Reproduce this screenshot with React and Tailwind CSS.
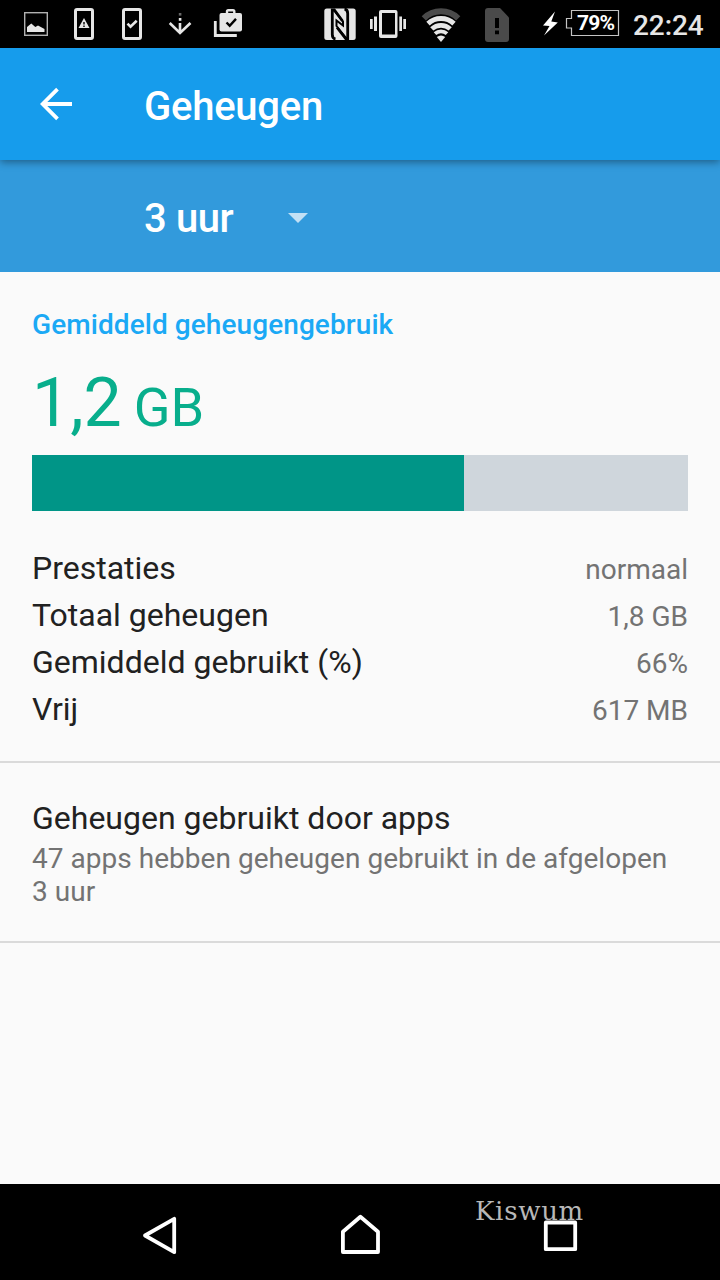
import React from 'react';

const stats = [
    { label: 'Prestaties', value: 'normaal' },
    { label: 'Totaal geheugen', value: '1,8 GB' },
    { label: 'Gemiddeld gebruikt (%)', value: '66%' },
    { label: 'Vrij', value: '617 MB' },
];

function NotificationIcons() {
    return (
        <div className="flex pl-3 text-[#e6e6e6]">
            {/* screenshot */}
            <svg className="size-12" viewBox="0 0 48 48" fill="currentColor">
                <rect x="12.700" y="12.700" width="22.600" height="22.600" fill="none" stroke="#b0b0b0" strokeWidth="1.400" />
                <path d="M15 32v-5l4.300-3.500 4 3.500 2.700-1.500 6.500 3.500V32z" />
            </svg>
            {/* phone with warning */}
            <svg className="size-12" viewBox="0 0 48 48" fill="currentColor">
                <path fillRule="evenodd" d="M17 8h14a3 3 0 0 1 3 3v26a3 3 0 0 1-3 3H17a3 3 0 0 1-3-3V11a3 3 0 0 1 3-3zm0 3v26h14V11z" />
                <path d="M24 18l5.500 10h-11z" />
                <path d="M23.300 22h1.400v2.600h-1.400zM23.300 25.500h1.400v1.400h-1.400z" fill="#000" />
            </svg>
            {/* phone with check */}
            <svg className="size-12" viewBox="0 0 48 48" fill="currentColor">
                <path fillRule="evenodd" d="M17 8h14a3 3 0 0 1 3 3v26a3 3 0 0 1-3 3H17a3 3 0 0 1-3-3V11a3 3 0 0 1 3-3zm0 3v26h14V11z" />
                <path d="M19.500 23.700l3 3 6.200-6" fill="none" stroke="currentColor" strokeWidth="2.600" />
            </svg>
            {/* download */}
            <svg className="size-12" viewBox="0 0 48 48" fill="currentColor">
                <path d="M22.800 13h2.600v2.600h-2.600z" fill="#666" />
                <path d="M22.800 18h2.600v2.800h-2.600z" />
                <path d="M24 23v10M13.700 23l10.300 10L34.500 23" fill="none" stroke="currentColor" strokeWidth="2.600" />
            </svg>
            {/* play store update */}
            <svg className="size-12" viewBox="0 0 48 48" fill="currentColor">
                <path d="M11.300 21v14.500h21.500" fill="none" stroke="currentColor" strokeWidth="2.800" />
                <rect x="15.500" y="13" width="22.500" height="18.500" rx="2" />
                <path d="M23 14v-2.500q0-1.300 1.300-1.300h4.700q1.300 0 1.300 1.300V14" fill="none" stroke="currentColor" strokeWidth="2.400" />
                <path d="M22.500 22.500l3.200 3.200 6.300-6.800" fill="none" stroke="#000" strokeWidth="2.400" />
            </svg>
        </div>
    );
}

function SystemIcons() {
    return (
        <div className="flex pr-[17px] text-[#e6e6e6]">
            {/* nfc */}
            <svg className="h-12 w-10" viewBox="320 0 40 48" fill="currentColor">
                <rect x="324.300" y="8.500" width="31.400" height="31.500" rx="2.500" />
                <path d="M335.500 39q-3.200-.5-3.200-4.500V9.800h2l8.200 11.200" fill="none" stroke="#000" strokeWidth="2.800" />
                <path d="M344.500 9q3.200.5 3.200 4.500v25h-2L337 27.500" fill="none" stroke="#000" strokeWidth="2.800" />
                <path d="M333.500 9.500l9.500 12v4l-6.500-5v5.500l10 12.500" fill="none" stroke="#000" strokeWidth="2" />
            </svg>
            {/* vibrate */}
            <svg className="h-12 w-14" viewBox="360 0 56 48" fill="currentColor">
                <path fillRule="evenodd" d="M381 10h14.500a2 2 0 0 1 2 2v24a2 2 0 0 1-2 2H381a2 2 0 0 1-2-2V12a2 2 0 0 1 2-2zm1 3v21.500h13V13z" />
                <path d="M374 16.500h3V31h-3zM370 19h2.700v10H370zM399.300 16.500h2.700V31h-2.700zM403.300 19h2.700v10h-2.700z" />
            </svg>
            {/* wifi */}
            <svg className="h-12 w-12" viewBox="416 0 48 48" fill="none" stroke="currentColor">
                <path d="M423.800 18.300a24.500 24.500 0 0 1 34.400 0" stroke="#4a4a4a" strokeWidth="6" />
                <path d="M428 23.600a19 19 0 0 1 26 0" strokeWidth="4.900" />
                <path d="M431.800 28.900a13.500 13.500 0 0 1 18.400 0" strokeWidth="4.700" />
                <path d="M435 33.700a9 9 0 0 1 12 0" strokeWidth="3.800" />
                <path d="M436.800 37q4.200-3.200 8.400 0l-4.200 5z" fill="currentColor" stroke="none" />
            </svg>
            {/* no sim */}
            <svg className="h-12 w-[72px]" viewBox="464 0 72 48" fill="#4a4a4a">
                <path d="M488 8h12l9 9.500V39a3 3 0 0 1-3 3h-18a3 3 0 0 1-3-3V11a3 3 0 0 1 3-3z" />
                <path d="M495 18h4v10h-4zM495 30.500h4v3.700h-4z" fill="#000" />
            </svg>
            {/* charging battery */}
            <svg className="h-12 w-7" viewBox="536 0 28 48" fill="#fff">
                <path d="M555 11.500l-12 14 6.500.5-5.500 9.500 13.800-13-6.500-1z" />
            </svg>
            <div className="relative h-12 w-[69px]">
                <svg className="h-12 w-[69px]" viewBox="564 0 69 48" fill="none">
                    <path d="M571.500 10.500h47v25h-47v-7.500h-5v-9.500h5z" stroke="#c4c4c4" strokeWidth="1.200" />
                </svg>
                <span className="absolute left-[13px] top-0 text-[21px] leading-[47px] font-bold tracking-[-0.8px] text-white">79%</span>
            </div>
            <span className="w-[70px] text-[28px] leading-[52px] font-medium tracking-[-0.1px]">22:24</span>
        </div>
    );
}

function StatusBar() {
    return (
        <div className="h-12 bg-black flex justify-between">
            <NotificationIcons />
            <SystemIcons />
        </div>
    );
}

function NavBar() {
    return (
        <nav className="relative h-24 pt-1.5 bg-black flex items-center text-white">
            <button className="ml-[136px] size-12">
                <svg className="size-12" viewBox="136 1211 48 48" fill="none" stroke="currentColor" strokeWidth="3.800" strokeLinejoin="round">
                    <path d="M174.200 1218.800v33.400L145 1235.500z" />
                </svg>
            </button>
            <button className="ml-[152px] size-12">
                <svg className="size-12" viewBox="336 1211 48 48" fill="none" stroke="currentColor" strokeWidth="3.800" strokeLinejoin="round">
                    <path d="M342.900 1252v-20.300l17.500-15 17.600 15V1252z" />
                </svg>
            </button>
            <button className="ml-[152px] size-12">
                <svg className="size-12" viewBox="536 1211 48 48" fill="none" stroke="currentColor" strokeWidth="3.800" strokeLinejoin="round">
                    <path d="M545.800 1222.500h29.400v26.700h-29.400z" />
                </svg>
            </button>
            <span className="absolute left-[475px] top-[11px] font-['DejaVu_Serif',serif] text-[26px] leading-8 tracking-[0.7px] text-[#b8b8b8]">Kiswum</span>
        </nav>
    );
}

function App() {
    return (
        <div className="w-[720px] h-[1280px] flex flex-col overflow-hidden bg-[#fafafa] font-[Roboto,sans-serif]">
            <StatusBar />

            <header className="relative z-10 h-28 bg-[#169cec] flex items-center text-white shadow-[0_2px_8px_rgba(0,0,0,0.4)]">
                <button className="w-36 pl-8">
                    <svg className="size-12" viewBox="32 80 48 48" fill="none" stroke="currentColor" strokeWidth="3.800">
                        <path d="M72 104H43M57.500 89.200L42.700 104l14.800 14.800" />
                    </svg>
                </button>
                <h1 className="pt-1.5 text-[40px] leading-none font-medium tracking-[-0.25px]">Geheugen</h1>
            </header>

            <div className="h-28 bg-[#329adc] flex items-center pl-36 text-white">
                <span className="w-[144px] pt-1.5 text-[40px] leading-none font-medium tracking-[-0.4px]">3 uur</span>
                <svg className="mt-[3px] h-2.5 w-5" viewBox="0 0 20 10" fill="#c2e0f5">
                    <path d="M0 0h20L10 10z" />
                </svg>
            </div>

            <main className="flex-1">
                <section className="px-8 pt-9 pb-7 border-b-2 border-[#dadada]">
                    <h2 className="text-[28px] leading-[33px] font-medium tracking-[0.08px] text-[#1ba9f5]">Gemiddeld geheugengebruik</h2>
                    <p className="mt-[21px] h-[81px] text-[68px] leading-[82px] text-[#08ae8c]">
                        1,2 <span className="text-[54px] -ml-[5px]">GB</span>
                    </p>
                    <div className="mt-3 h-14 bg-[#cfd6dc]">
                        <div className="h-14 w-[432px] bg-[#009587]" />
                    </div>
                    <div className="mt-[34px]">
                        {stats.map((item) => (
                            <div key={item.label} className="h-[47px] flex justify-between items-baseline leading-[47px]">
                                <span className="text-[32px] text-[#212121]">{item.label}</span>
                                <span className="text-[28px] text-[#737373]">{item.value}</span>
                            </div>
                        ))}
                    </div>
                </section>

                <section className="px-8 pt-9 pb-[33px] border-b-2 border-[#dadada]">
                    <h3 className="text-[32px] leading-[38px] text-[#212121]">Geheugen gebruikt door apps</h3>
                    <p className="mt-[5px] text-[28px] leading-[33px] tracking-[0.03px] text-[#737373]">
                        47 apps hebben geheugen gebruikt in de afgelopen 3 uur
                    </p>
                </section>
            </main>

            <NavBar />
        </div>
    );
}

export default App;
